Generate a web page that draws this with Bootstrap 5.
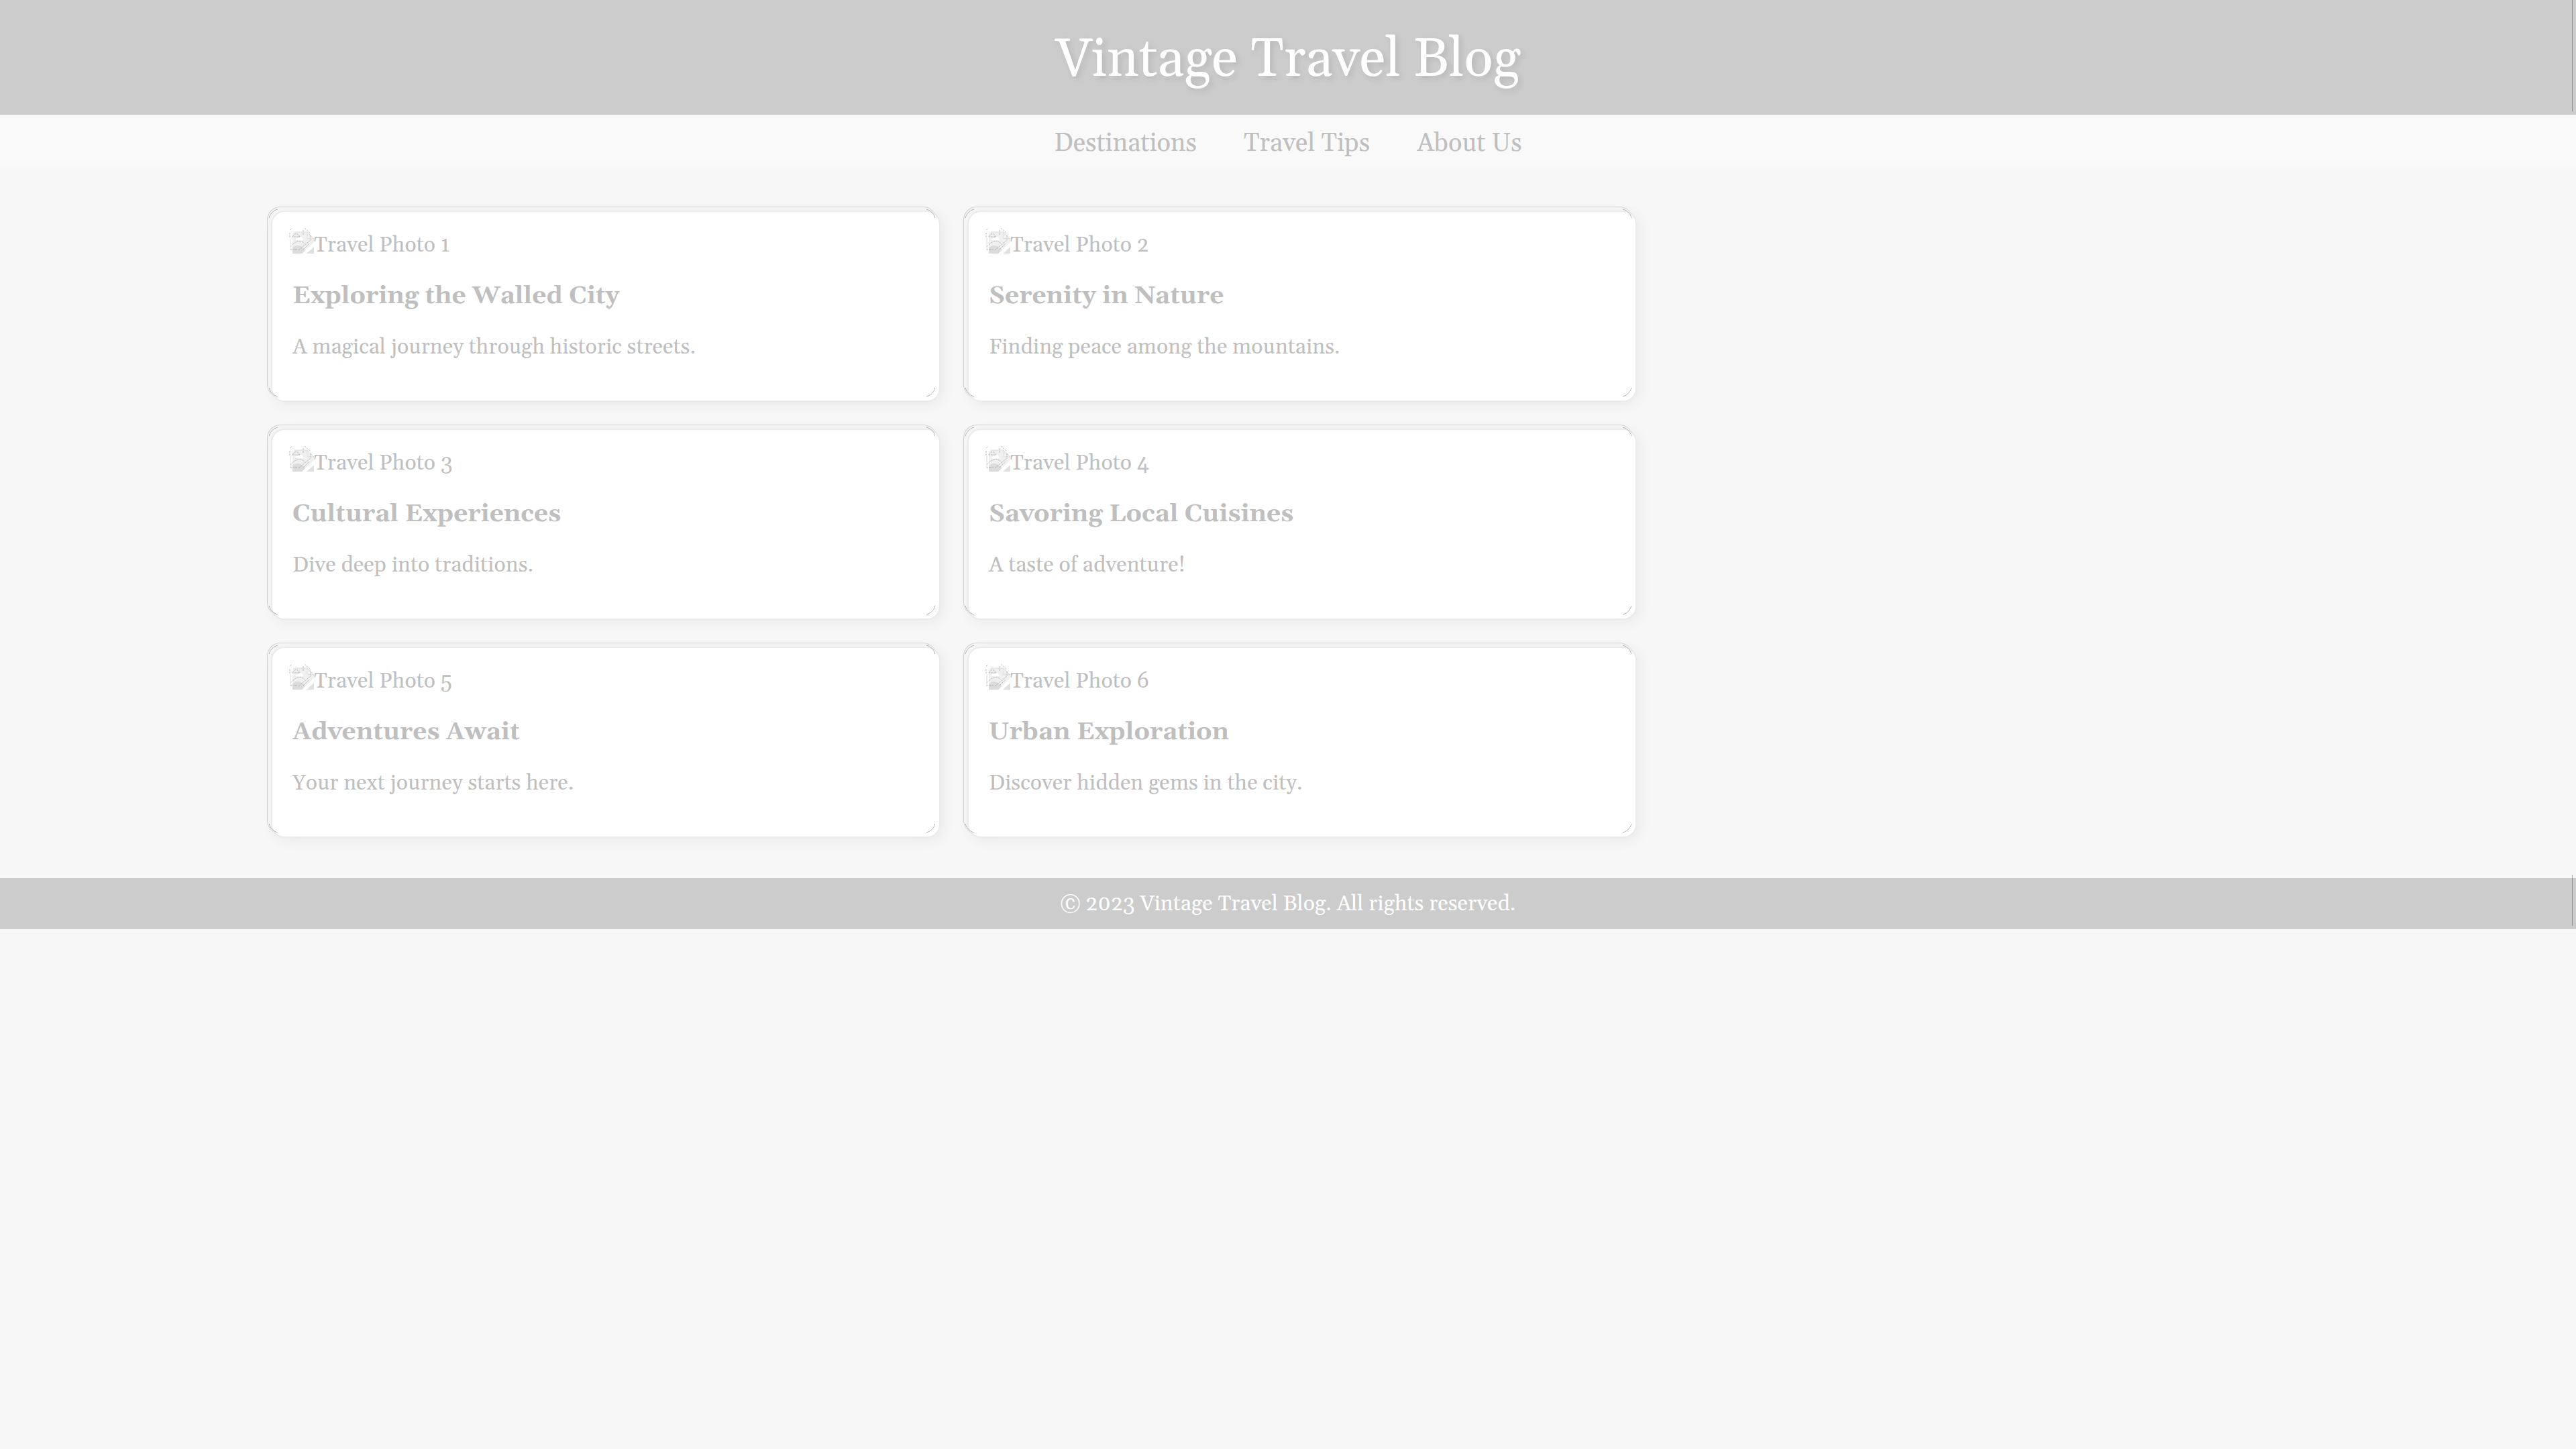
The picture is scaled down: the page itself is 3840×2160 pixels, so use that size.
<!DOCTYPE html>
<html lang="en">
<head>
<meta charset="utf-8">
<meta name="viewport" content="width=device-width, initial-scale=1">
<title>Vintage Travel Blog</title>
<link href="https://cdn.jsdelivr.net/npm/bootstrap@5.3.0/dist/css/bootstrap.min.css" rel="stylesheet">
<style>
body { background: #f7f7f7; color: #bfbfbf; font-family: Georgia, Gelasio, "DejaVu Serif", serif; font-size: 32px; line-height: 40px; }
.site-header, .site-footer { background: #ccc; color: #fff; }
/* thin rule near the right edge of both bars */
.edge-line::after { content: ""; position: absolute; top: -5px; bottom: 5px; right: 5px; width: 1px; background: rgba(0,0,0,.3); }
.site-header { padding: 44px 0 36px; }
.site-title { font-size: 80px; line-height: 91px; font-weight: 400; text-shadow: 4px 4px 8px rgba(0,0,0,.1); }
.site-nav { background: #f9f9f9; padding: 21px 0 16px; gap: 70px; }
.site-nav a { font-size: 38px; line-height: 44px; color: #bfbfbf; text-decoration: none; }
.posts { width: 2076px; max-width: 100%; margin-left: 10%; padding: 62px 20px 60px; display: grid; grid-template-columns: 1fr 1fr; gap: 40px; }
.post { position: relative; background: #fff; border: 2px solid #ebebeb; border-radius: 20px; padding: 30px 30px 59px; box-shadow: 4px 4px 20px rgba(0,0,0,.06); }
/* outer hairline and the four engraved corner arcs */
.post::before { content: ""; position: absolute; inset: -8px 4px 4px -8px; border: solid #d0d0d0; border-width: 1px 0 0 1px; border-radius: 20px; }
.post::after { content: ""; position: absolute; inset: -5px 5px 5px -6px; border: 1px solid #a8a8a8; border-radius: 18px;
  -webkit-mask: linear-gradient(#000 0 0) 0 0 / 14px 14px no-repeat, linear-gradient(#000 0 0) 100% 0 / 14px 14px no-repeat, linear-gradient(#000 0 0) 0 100% / 14px 14px no-repeat, linear-gradient(#000 0 0) 100% 100% / 14px 14px no-repeat; }
.photo svg { width: 32px; height: 32px; overflow: visible; flex: none; }
.post h2 { font-size: 37px; line-height: 44px; font-weight: 700; margin: 34px 0; }
.site-footer { padding: 19px 0 17px; }
</style>
</head>
<body>
<svg class="d-none" xmlns="http://www.w3.org/2000/svg">
  <symbol id="photo-icon" viewBox="0 0 32 32" overflow="visible">
    <path d="M3 0H22L32 10V15L14 32H0V4Q0 0 3 0Z" fill="#f0f0f0"/>
    <path d="M0 23Q10 15 19 27L14 32H0Z" fill="#dcdcdc"/>
    <path d="M32 22V32H21Z" fill="#e0e0e0"/>
    <path d="M3 0H22L32 10H22V0" fill="none" stroke="#dcdcdc"/>
    <path d="M4 12Q5 8 9 9Q14 4 16 12Z" fill="#fff"/>
    <g fill="none" stroke="#a0a0a0" stroke-width=".7" stroke-dasharray="3 1">
      <path d="M0 7Q5-2 11 7ZM-4 1V8M-4-3L-1-6M16-3V4M18-6L27 2M-3 22Q9 8 18 17M-4 26H8M9 27L28 11M16 26L25 17M27 5V10"/>
    </g>
    <path d="M-3 9V25" stroke="#ddd" fill="none"/>
  </symbol>
</svg>
<header class="site-header edge-line position-relative text-center"><h1 class="site-title m-0">Vintage Travel Blog</h1></header>
<nav class="site-nav d-flex justify-content-center"><a href="#">Destinations</a><a href="#">Travel Tips</a><a href="#">About Us</a></nav>
<main class="posts">
<article class="post"><div class="photo d-flex"><svg aria-hidden="true"><use href="#photo-icon"/></svg><span>Travel Photo 1</span></div><h2>Exploring the Walled City</h2><p class="m-0">A magical journey through historic streets.</p></article>
<article class="post"><div class="photo d-flex"><svg aria-hidden="true"><use href="#photo-icon"/></svg><span>Travel Photo 2</span></div><h2>Serenity in Nature</h2><p class="m-0">Finding peace among the mountains.</p></article>
<article class="post"><div class="photo d-flex"><svg aria-hidden="true"><use href="#photo-icon"/></svg><span>Travel Photo 3</span></div><h2>Cultural Experiences</h2><p class="m-0">Dive deep into traditions.</p></article>
<article class="post"><div class="photo d-flex"><svg aria-hidden="true"><use href="#photo-icon"/></svg><span>Travel Photo 4</span></div><h2>Savoring Local Cuisines</h2><p class="m-0">A taste of adventure!</p></article>
<article class="post"><div class="photo d-flex"><svg aria-hidden="true"><use href="#photo-icon"/></svg><span>Travel Photo 5</span></div><h2>Adventures Await</h2><p class="m-0">Your next journey starts here.</p></article>
<article class="post"><div class="photo d-flex"><svg aria-hidden="true"><use href="#photo-icon"/></svg><span>Travel Photo 6</span></div><h2>Urban Exploration</h2><p class="m-0">Discover hidden gems in the city.</p></article>
</main>
<footer class="site-footer edge-line position-relative text-center"><p class="m-0">© 2023 Vintage Travel Blog. All rights reserved.</p></footer>
<script src="https://cdn.jsdelivr.net/npm/bootstrap@5.3.0/dist/js/bootstrap.bundle.min.js"></script>
</body>
</html>
